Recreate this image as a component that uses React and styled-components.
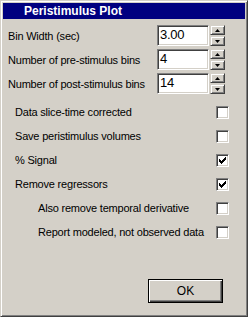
import React from "react";
import styled, { createGlobalStyle } from "styled-components";

const Global = createGlobalStyle`
  html, body { margin: 0; padding: 0; background: #d4d0c8; }
  * { box-sizing: border-box; }
`;

const Window = styled.div`
  width: 248px;
  height: 317px;
  background: #d4d0c8;
  border: 1px solid;
  border-color: #d4d0c8 #404040 #404040 #d4d0c8;
  box-shadow: inset 1px 1px #ffffff, inset -1px -1px #808080;
  padding: 2px;
  display: flex;
  flex-direction: column;
  font-family: "Liberation Sans", Arial, sans-serif;
  color: #000;
`;

const TitleBar = styled.div`
  height: 16px;
  background: #000080;
  color: #fff;
  font-weight: bold;
  font-size: 12px;
  line-height: 16px;
  padding-left: 21px;
`;

const Body = styled.div`
  flex: 1;
  display: flex;
  flex-direction: column;
  padding-top: 6px;
`;

const SpinRow = styled.div`
  display: flex;
  align-items: center;
  height: 21px;
  margin-bottom: 3px;
  padding-left: 5px;
  padding-right: 20px;
`;

const Label = styled.span`
  flex: 1;
  font-size: 11px;
  letter-spacing: -0.2px;
  white-space: nowrap;
`;

const Field = styled.div`
  width: 52px;
  height: 21px;
  background: #fff;
  border: 1px solid;
  border-color: #808080 #ffffff #ffffff #808080;
  box-shadow: inset 1px 1px #404040, inset -1px -1px #d4d0c8;
  font-size: 13px;
  letter-spacing: -0.3px;
  line-height: 17px;
  padding-left: 2px;
`;

const Spinner = styled.div`
  display: flex;
  flex-direction: column;
  gap: 1px;
  margin-left: 1px;
`;

const SpinButton = styled.div`
  width: 15px;
  height: 10px;
  background: #d4d0c8;
  border: 1px solid;
  border-color: #d4d0c8 #404040 #404040 #d4d0c8;
  box-shadow: inset 1px 1px #ffffff, inset -1px -1px #808080;
  display: flex;
  align-items: center;
  justify-content: center;
`;

const Arrow = ({ up }) => (
  <svg width="5" height="3" viewBox="0 0 5 3">
    <polygon
      points={up ? "2.5,0 5,3 0,3" : "0,0 5,0 2.5,3"}
      fill="#000"
    />
  </svg>
);

const CheckSection = styled.div`
  margin-top: 3px;
  display: flex;
  flex-direction: column;
`;

const CheckRow = styled.div`
  display: flex;
  align-items: center;
  height: 24px;
  padding-left: ${(p) => (p.$sub ? 35 : 12)}px;
  padding-right: 16px;
`;

const Box = styled.div`
  width: 13px;
  height: 13px;
  background: #fff;
  border: 1px solid;
  border-color: #808080 #ffffff #ffffff #808080;
  box-shadow: inset 1px 1px #404040, inset -1px -1px #d4d0c8;
  display: flex;
  align-items: center;
  justify-content: center;
`;

const CheckMark = () => (
  <svg width="7" height="7" viewBox="0 0 7 7" shapeRendering="crispEdges">
    <path
      d="M6 0h1v3h-1v1h-1v1h-1v1h-1v1h-1v-1h-1v-1h-1v-3h1v1h1v1h1v-1h1v-1h1z"
      fill="#000"
    />
  </svg>
);

const Footer = styled.div`
  margin-top: auto;
  display: flex;
  justify-content: flex-end;
  padding-right: 22px;
  padding-bottom: 11px;
`;

const Button = styled.button`
  width: 75px;
  height: 24px;
  background: #d4d0c8;
  border: 1px solid #000;
  box-shadow: inset 1px 1px #ffffff, inset -1px -1px #404040,
    inset -2px -2px #808080;
  font-family: "Liberation Sans", Arial, sans-serif;
  font-size: 12px;
  color: #000;
  padding: 0;
`;

const spins = [
  { label: "Bin Width (sec)", value: "3.00" },
  { label: "Number of pre-stimulus bins", value: "4" },
  { label: "Number of post-stimulus bins", value: "14" },
];

const checks = [
  { label: "Data slice-time corrected", checked: false },
  { label: "Save peristimulus volumes", checked: false },
  { label: "% Signal", checked: true },
  { label: "Remove regressors", checked: true },
  { label: "Also remove temporal derivative", checked: false, sub: true },
  { label: "Report modeled, not observed data", checked: false, sub: true },
];

export default function App() {
  return (
    <>
      <Global />
      <Window>
        <TitleBar>Peristimulus Plot</TitleBar>
        <Body>
          {spins.map((s) => (
            <SpinRow key={s.label}>
              <Label>{s.label}</Label>
              <Field>{s.value}</Field>
              <Spinner>
                <SpinButton>
                  <Arrow up />
                </SpinButton>
                <SpinButton>
                  <Arrow />
                </SpinButton>
              </Spinner>
            </SpinRow>
          ))}
          <CheckSection>
            {checks.map((c) => (
              <CheckRow key={c.label} $sub={c.sub}>
                <Label>{c.label}</Label>
                <Box>{c.checked && <CheckMark />}</Box>
              </CheckRow>
            ))}
          </CheckSection>
          <Footer>
            <Button>OK</Button>
          </Footer>
        </Body>
      </Window>
    </>
  );
}
